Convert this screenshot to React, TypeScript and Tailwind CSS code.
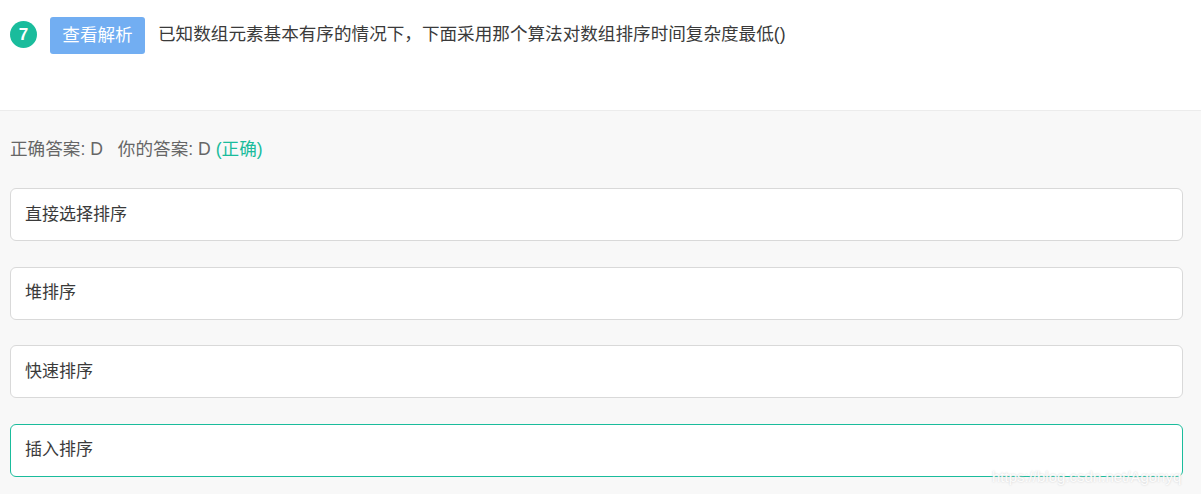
import React from "react";

const options = ["直接选择排序", "堆排序", "快速排序", "插入排序"];

export default function App() {
  return (
    <div
      className="relative w-[1201px] h-[494px] overflow-hidden bg-[#f8f8f8] text-[#333]"
      style={{ fontFamily: '"Liberation Sans", "Noto Sans CJK SC", sans-serif' }}
    >
      <div className="h-[111px] bg-white border-b border-[#ececec] flex items-start pt-[17px] pl-[10px]">
        <div className="mt-[4px] w-[27px] h-[27px] rounded-full bg-[#1abc9c] text-white flex items-center justify-center text-[17px] font-bold leading-none">
          7
        </div>
        <div className="ml-[13px] w-[95px] h-[37px] rounded-[3px] bg-[#72aef2] text-white text-[17.6px] flex items-center justify-center">
          查看解析
        </div>
        <div className="ml-[13px] mt-[5px] text-[17.6px] leading-[24px] text-[#3a3a3a]">
          已知数组元素基本有序的情况下，下面采用那个算法对数组排序时间复杂度最低()
        </div>
      </div>
      <div className="px-[10px] pr-[18px]">
        <div className="h-[77px] flex items-center text-[17.6px] text-[#666] pb-[1px]">
          <span>正确答案: D</span>
          <span className="ml-[15px]">你的答案: D</span>
          <span className="ml-[5px] text-[#1abc9c]">(正确)</span>
        </div>
        <div className="flex flex-col gap-[25.5px]">
          {options.map((o, i) => (
            <div
              key={o}
              className={
                i === 3
                  ? "h-[53px] rounded-[6px] bg-white border border-[#1abc9c] flex items-center pl-[14px] text-[17px] text-[#3a3a3a]"
                  : "h-[53px] rounded-[6px] bg-white border border-[#d9d9d9] flex items-center pl-[14px] text-[17px] text-[#3a3a3a]"
              }
            >
              {o}
            </div>
          ))}
        </div>
      </div>
      <div
        className="absolute left-[992px] top-[466px] text-[15px] text-white/90 [text-shadow:0_0_2px_#c8c8c8]"
        style={{ fontFamily: '"Liberation Sans", sans-serif' }}
      >
        https://blog.csdn.net/Agonyq
      </div>
    </div>
  );
}
